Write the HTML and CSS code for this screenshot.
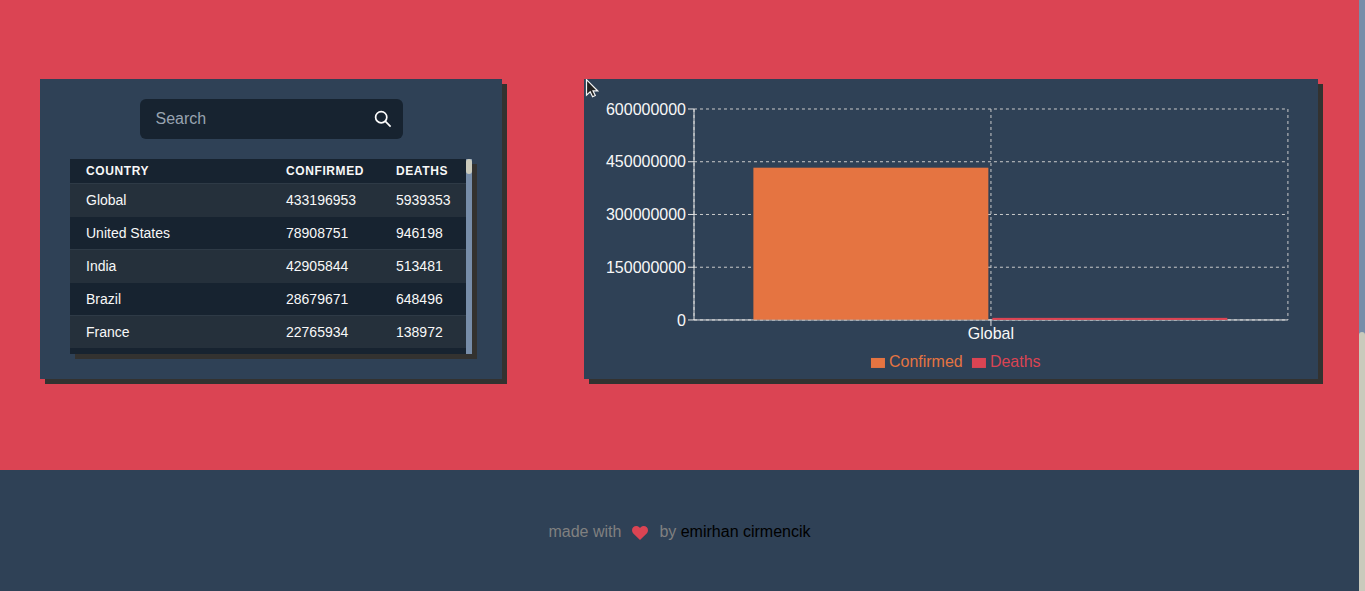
FILE: index.html
```html
<!DOCTYPE html>
<html lang="en">
<head>
<meta charset="utf-8">
<title>Covid tracker</title>
<link rel="stylesheet" href="styles.css">
</head>
<body>
<div class="page">
  <div class="content">
    <main class="dashboard">
      <section class="card countries">
        <form class="search">
          <input class="search-input" type="text" placeholder="Search" aria-label="Search">
          <button class="search-button" type="button" aria-label="Search countries">
            <svg viewBox="0 0 18 18" width="18" height="18" fill="none" stroke="currentColor" stroke-width="1.7"><circle cx="7.2" cy="7.2" r="5.6"/><path d="M11.200 11.200l5.400 5.400"/></svg>
          </button>
        </form>
        <div class="table-box">
          <table class="table">
            <thead>
              <tr><th class="col-country">Country</th><th class="col-confirmed">Confirmed</th><th class="col-deaths">Deaths</th></tr>
            </thead>
            <tbody>
              <tr><td>Global</td><td>433196953</td><td>5939353</td></tr>
              <tr><td>United States</td><td>78908751</td><td>946198</td></tr>
              <tr><td>India</td><td>42905844</td><td>513481</td></tr>
              <tr><td>Brazil</td><td>28679671</td><td>648496</td></tr>
              <tr><td>France</td><td>22765934</td><td>138972</td></tr>
            </tbody>
          </table>
          <div class="scrollbar"><div class="thumb thumb-table"></div></div>
        </div>
      </section>
      <section class="card chart-card">
        <svg class="chart" viewBox="0 0 734 300" role="img" aria-label="Confirmed cases and deaths, global">
          <g class="grid">
            <path d="M110 30H704M110 82.75H704M110 135.5H704M110 188.25H704M110 241H704"/>
            <path d="M110 30V241M407 30V241M704 30V241"/>
          </g>
          <path class="axis" d="M110 241H704M407 241V247"/>
          <path class="axis" d="M110 30V241M104 30H110M104 82.75H110M104 135.5H110M104 188.25H110M104 241H110"/>
          <g class="label label-y">
            <text x="102" y="36">600000000</text>
            <text x="102" y="88">450000000</text>
            <text x="102" y="141">300000000</text>
            <text x="102" y="194">150000000</text>
            <text x="102" y="247">0</text>
          </g>
          <text class="label label-x" x="407" y="260">Global</text>
          <rect class="confirmed" x="169.4" y="88.7" width="235" height="152"/>
          <rect class="deaths" x="408.4" y="238.9" width="235" height="2.1"/>
          <rect class="confirmed" x="287" y="279" width="14" height="10"/>
          <text class="label confirmed" x="305" y="288">Confirmed</text>
          <rect class="deaths" x="388" y="279" width="14" height="10"/>
          <text class="label deaths" x="406" y="288">Deaths</text>
        </svg>
        <svg class="cursor" viewBox="0 0 14 20" width="14" height="20"><path d="M1.500.7V16.200l3.700-3.400 2.400 4.900 2.700-1.200-2.300-4.700h4.600z" fill="#222" stroke="#f4f4f4" stroke-width="1.2"/></svg>
      </section>
    </main>
    <footer class="footer">
      <span>made with</span>
      <svg class="heart" viewBox="0 0 16 14" width="16" height="14"><path d="M8 14L1.300 7.400C-.4 5.600-.4 2.800 1.200 1.200C2.900-.4 5.700-.4 7.300 1.200L8 1.900L8.700 1.200C10.300-.4 13.100-.4 14.800 1.200C16.400 2.800 16.400 5.600 14.700 7.400Z" fill="currentColor"/></svg>
      <span>by <a class="author" href="#">emirhan cirmencik</a></span>
    </footer>
  </div>
  <div class="scrollbar"><div class="thumb thumb-page"></div></div>
</div>
</body>
</html>
```
FILE: styles.css
```css
* {
  box-sizing: border-box;
}

body {
  margin: 0;
  background: #db4453;
  color: #f8f8f8;
  font: 16px/20px "Liberation Sans", Arial, sans-serif;
}

.page {
  display: grid;
  grid-template-columns: 1fr 6px;
  min-height: 100vh;
}

.content {
  display: flex;
  flex-direction: column;
}

.dashboard {
  display: grid;
  grid-template-columns: 34fr 54fr;
  gap: 82px;
  align-items: start;
  padding: 79px 41px 91px 40px;
}

.card {
  background: #2f4156;
  box-shadow: 5px 5px #333230;
}

.countries {
  padding: 20px 30px 25px;
}

.search {
  display: flex;
  width: 263px;
  height: 40px;
  margin: 0 auto 20px;
  border-radius: 6px;
  background: #172330;
}

.search-input {
  flex: 1;
  min-width: 0;
  padding: 0 0 0 16px;
  border: 0;
  outline: 0;
  background: none;
  color: #fff;
  font: inherit;
}

.search-input::placeholder {
  color: #99a3b1;
  opacity: 1;
}

.search-button {
  display: flex;
  align-items: center;
  padding: 0 11px;
  border: 0;
  background: none;
  color: #fff;
}

.table-box {
  display: grid;
  grid-template-columns: 1fr 6px;
  align-items: start;
  height: 195px;
  background: #172330;
  box-shadow: 5px 5px #333230;
}

.table {
  width: 100%;
  table-layout: fixed;
  border-spacing: 0;
  text-align: left;
  font-size: 14px;
}

.table th {
  height: 24px;
  padding: 0 0 0 16px;
  font-size: 12px;
  line-height: 16px;
  letter-spacing: 0.05em;
  text-transform: uppercase;
}

.table td {
  height: 33px;
  padding: 0 0 0 16px;
  border-top: 1px solid #25303b;
}

.table tbody tr:nth-child(odd) td {
  border-top-color: #2e3a46;
  background: #25303b;
}

.col-country {
  width: 200px;
}

.col-confirmed {
  width: 110px;
}

.scrollbar {
  display: flex;
  flex-direction: column;
  align-self: stretch;
  background: #778da9;
}

.thumb {
  border-radius: 3px;
  background: #cacabc;
}

.thumb-table {
  height: 15px;
}

.thumb-page {
  height: 44%;
  margin-top: auto;
  border-radius: 3px 3px 0 0;
}

.chart-card {
  position: relative;
}

.chart {
  display: block;
  width: 100%;
}

.grid {
  fill: none;
  stroke: #cccccc;
  stroke-dasharray: 3 3;
}

.axis {
  fill: none;
  stroke: #e4e4e4;
}

.label {
  font-size: 16px;
  fill: #f8f8f8;
}

.label-y {
  text-anchor: end;
}

.label-x {
  text-anchor: middle;
}

.confirmed {
  fill: #e57441;
}

.deaths {
  fill: #db4453;
}

.cursor {
  position: absolute;
  top: 0;
  left: 1px;
}

.footer {
  display: flex;
  flex: 1;
  align-items: center;
  justify-content: center;
  gap: 11px;
  padding: 52px 0 50px;
  background: #2f4156;
  color: #808080;
}

.heart {
  margin-top: 2px;
  color: #db4453;
}

.author {
  color: #000;
  text-decoration: none;
}
```
